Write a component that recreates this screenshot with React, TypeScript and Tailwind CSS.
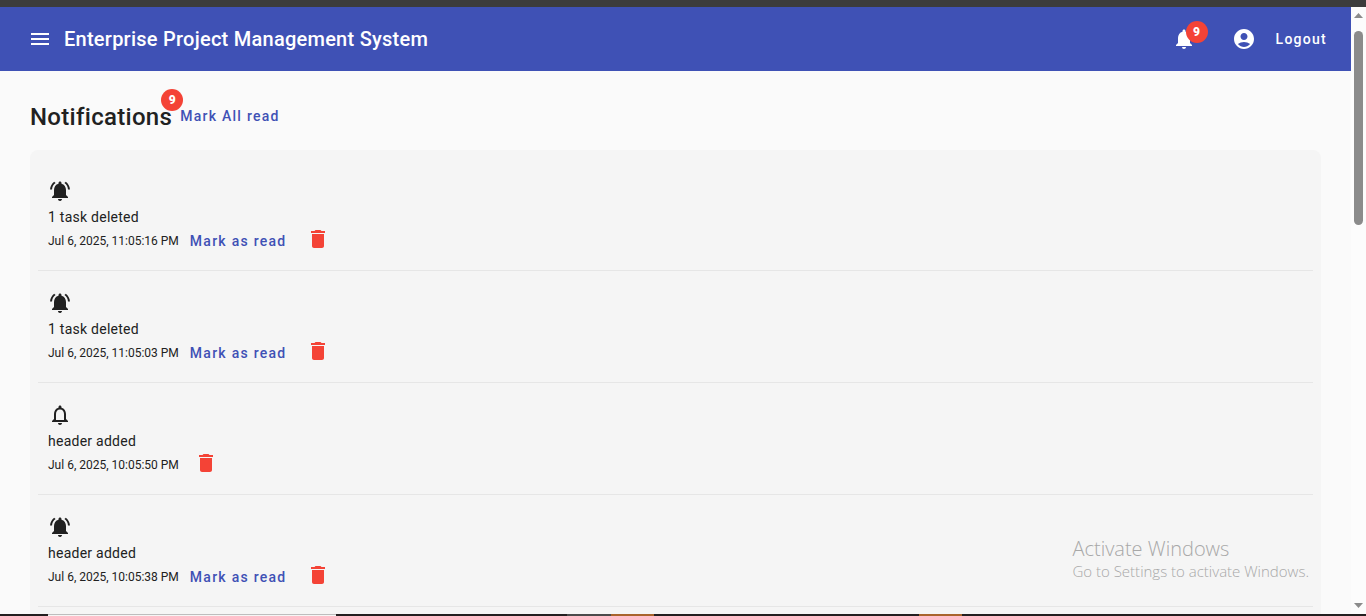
import React from "react";
import {
  MdAccountCircle,
  MdDelete,
  MdMenu,
  MdNotifications,
  MdNotificationsActive,
  MdNotificationsNone,
} from "react-icons/md";

type Notification = {
  id: number;
  message: string;
  date: string;
  unread: boolean;
};

const notifications: Notification[] = [
  { id: 1, message: "1 task deleted", date: "Jul 6, 2025, 11:05:16 PM", unread: true },
  { id: 2, message: "1 task deleted", date: "Jul 6, 2025, 11:05:03 PM", unread: true },
  { id: 3, message: "header added", date: "Jul 6, 2025, 10:05:50 PM", unread: false },
  { id: 4, message: "header added", date: "Jul 6, 2025, 10:05:38 PM", unread: true },
];

function Badge({ count, className }: { count: number; className: string }) {
  return (
    <span
      className={`absolute flex size-[22px] items-center justify-center rounded-full bg-[#f44336] text-xs leading-none font-black tracking-normal text-white ${className}`}
    >
      {count}
    </span>
  );
}

function Header() {
  return (
    <header className="flex h-16 shrink-0 items-center bg-[#3f51b5] pl-7 pr-6 text-white">
      <button type="button" aria-label="Menu">
        <MdMenu className="size-6" />
      </button>
      <span className="ml-3 text-xl font-medium tracking-[0.0125em]">
        Enterprise Project Management System
      </span>
      <div className="ml-auto flex items-center">
        <button type="button" aria-label="Notifications" className="relative">
          <MdNotifications className="size-6" />
          <Badge count={9} className="-top-1.5 left-3.5" />
        </button>
        <button type="button" aria-label="Account" className="ml-9">
          <MdAccountCircle className="size-6" />
        </button>
        <button type="button" className="ml-5 text-sm font-medium tracking-[0.09em]">
          Logout
        </button>
      </div>
    </header>
  );
}

function NotificationItem({ item }: { item: Notification }) {
  const Icon = item.unread ? MdNotificationsActive : MdNotificationsNone;
  return (
    <li className="border-b border-[#e6e6e6] px-2.5 pb-[15px] pt-5">
      <Icon className="size-6" />
      <p className="mt-1 text-sm leading-5 tracking-[0.018em]">{item.message}</p>
      <div className="flex h-7 items-center">
        <span className="pr-[3px] text-xs">{item.date}</span>
        {item.unread && (
          <button
            type="button"
            className="px-2 text-sm font-medium tracking-[0.09em] text-[#3f51b5]"
          >
            Mark as read
          </button>
        )}
        <button type="button" aria-label="Delete" className="ml-3 pb-1 text-[#f44336]">
          <MdDelete className="size-6" />
        </button>
      </div>
    </li>
  );
}

function Scrollbar() {
  return (
    <div aria-hidden="true" className="flex w-[15px] shrink-0 flex-col items-center bg-[#fcfcfc] py-1.5">
      <svg className="h-[5px] w-[9px]" viewBox="0 0 9 5" fill="#8b8b8b">
        <path d="M4.5 0 9 5H0z" />
      </svg>
      <div className="mt-[13px] flex w-[9px] flex-1 flex-col">
        <div className="h-[34%] rounded-full bg-[#8b8b8b]" />
      </div>
      <svg className="h-[5px] w-[9px]" viewBox="0 0 9 5" fill="#8b8b8b">
        <path d="M0 0h9L4.5 5z" />
      </svg>
    </div>
  );
}

export default function App() {
  return (
    <div className="relative flex h-screen flex-col overflow-hidden bg-[#fafafa] font-['Roboto',sans-serif] text-[#212121]">
      <div className="h-[7px] shrink-0 bg-[#3c3c3c]" />
      <div className="flex min-h-0 flex-1">
        <div className="flex min-w-0 flex-1 flex-col overflow-hidden">
          <Header />
          <main className="px-[30px] pt-7">
            <div className="flex items-center">
              <h1 className="relative pt-0.5 text-2xl leading-8 font-medium tracking-[0.0125em]">
                Notifications
                <Badge count={9} className="-right-[11px] -top-2.5" />
              </h1>
              <button
                type="button"
                className="ml-2 text-sm font-medium tracking-[0.09em] text-[#3f51b5]"
              >
                Mark All read
              </button>
            </div>
            <ul className="mt-[17px] rounded-lg bg-[#f5f5f5] px-2 pb-5 pt-[9px]">
              {notifications.map((item) => (
                <NotificationItem key={item.id} item={item} />
              ))}
            </ul>
          </main>
        </div>
        <Scrollbar />
      </div>
      <div aria-hidden="true" className="flex h-0.5 shrink-0 bg-[#231f20]">
        <div className="ml-12 w-72 border-t border-[#bdbdbd] bg-[#f5f5f5]" />
        <div className="ml-[231px] w-11 bg-[#4b4b4b]" />
        <div className="w-[43px] bg-[#a9642c]" />
        <div className="ml-[265px] w-[43px] bg-[#a9642c]" />
      </div>
      <div className="pointer-events-none absolute bottom-[35px] right-[57px] font-['Open_Sans',sans-serif] font-light text-[#a8a8a8]">
        <p className="text-xl leading-6">Activate Windows</p>
        <p className="text-[15px] leading-5">Go to Settings to activate Windows.</p>
      </div>
    </div>
  );
}
